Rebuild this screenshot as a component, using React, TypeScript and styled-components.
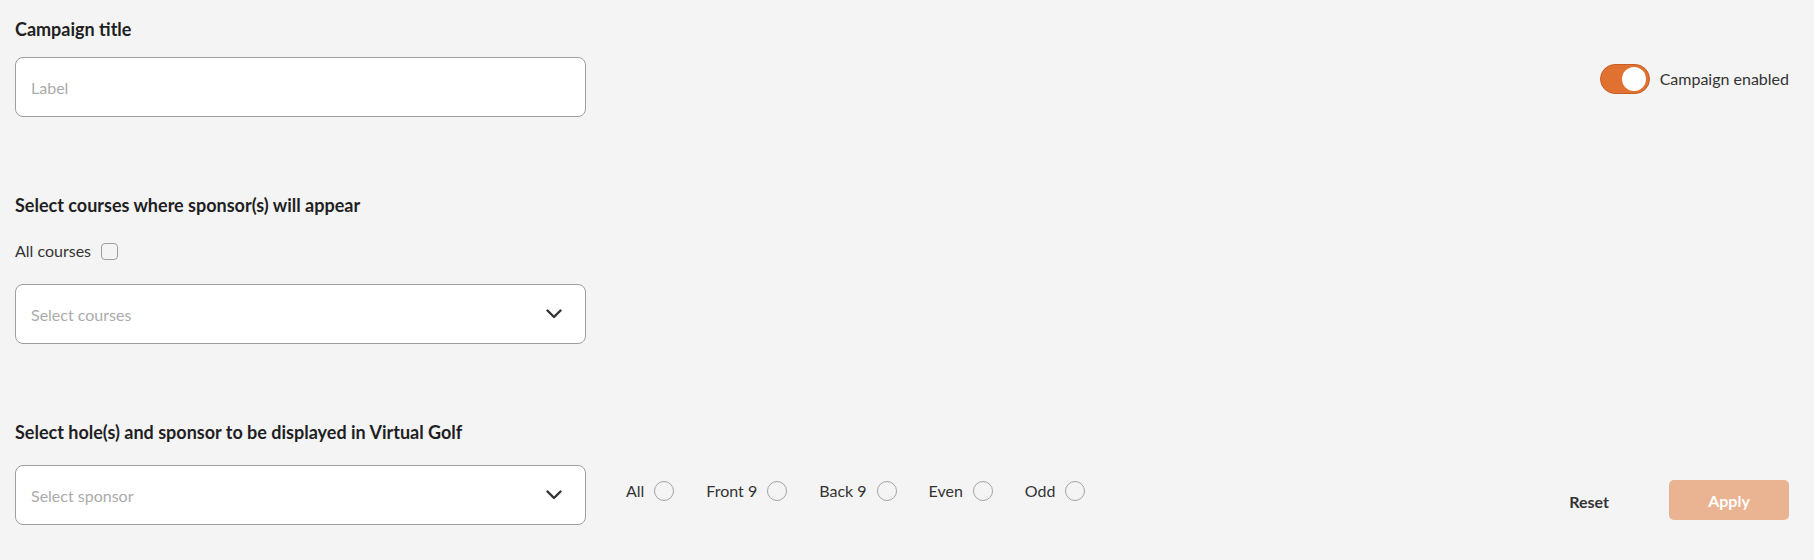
import styled, { createGlobalStyle } from 'styled-components';

const GlobalStyle = createGlobalStyle`
  * {
    box-sizing: border-box;
  }
  body {
    margin: 0;
    background: #f4f4f4;
    font-family: Lato, 'Open Sans', sans-serif;
    color: #333;
  }
`;

const Page = styled.div`
  min-height: 560px;
  padding: 18px 25px 0 15px;
  display: flex;
  flex-direction: column;
`;

const Section = styled.section<{ $gap?: number }>`
  margin-top: ${({ $gap }) => $gap ?? 0}px;
  display: flex;
  flex-direction: column;
`;

const TopRow = styled.div`
  display: flex;
  justify-content: space-between;
  align-items: flex-start;
`;

const Heading = styled.h2<{ $below: number }>`
  margin: 0 0 ${({ $below }) => $below}px;
  font-size: 18px;
  line-height: 22px;
  font-weight: 700;
  color: #1f1f24;
`;

const fieldBox = `
  width: 571px;
  height: 60px;
  border: 1px solid #9e9e9e;
  border-radius: 8px;
  background: #fff;
  font-family: Lato, 'Open Sans', sans-serif;
  font-size: 16px;
`;

const TextInput = styled.input`
  ${fieldBox}
  display: block;
  padding: 0 15px;
  color: #333;
  outline: none;

  &::placeholder {
    color: #ababab;
  }
`;

const Select = styled.div`
  ${fieldBox}
  display: flex;
  align-items: center;
  justify-content: space-between;
  padding: 0 23px 0 15px;
  color: #ababab;
  cursor: pointer;
  flex-shrink: 0;
`;

const Chevron = () => (
  <svg width="16" height="10" viewBox="0 0 16 10" fill="none" aria-hidden="true">
    <path d="M1.5 1.5L8 8L14.5 1.5" stroke="#333" strokeWidth="2.4" strokeLinecap="round" strokeLinejoin="round" />
  </svg>
);

const ToggleLabel = styled.label`
  margin-top: 46px;
  display: flex;
  align-items: center;
  gap: 10px;
  font-size: 16px;
  line-height: 20px;
  color: #333;
`;

const Track = styled.span<{ $on: boolean }>`
  width: 50px;
  height: 30px;
  padding: 0 3px;
  border-radius: 15px;
  border: 1px solid ${({ $on }) => ($on ? '#c75f24' : '#9e9e9e')};
  background: ${({ $on }) => ($on ? '#e07131' : '#ccc')};
  display: flex;
  align-items: center;
  justify-content: ${({ $on }) => ($on ? 'flex-end' : 'flex-start')};
`;

const Knob = styled.span`
  width: 24px;
  height: 24px;
  border-radius: 50%;
  background: #fff;
`;

const CheckRow = styled.label`
  margin-bottom: 23px;
  display: flex;
  align-items: center;
  gap: 10px;
  height: 20px;
  font-size: 16px;
  line-height: 20px;
  color: #333;
`;

const Checkbox = styled.input`
  appearance: none;
  margin: 0;
  width: 17px;
  height: 17px;
  border: 1.5px solid #9e9e9e;
  border-radius: 4px;
  background: transparent;
`;

const BottomRow = styled.div`
  display: flex;
  align-items: flex-start;
`;

const RadioGroup = styled.div`
  margin: 16px 0 0 40px;
  display: flex;
  gap: 32px;
`;

const RadioOption = styled.label`
  display: flex;
  align-items: center;
  gap: 10px;
  font-size: 16px;
  line-height: 20px;
  color: #333;
`;

const Radio = styled.input`
  appearance: none;
  margin: 0;
  width: 20px;
  height: 20px;
  border: 1.5px solid #a3a3a3;
  border-radius: 50%;
  background: transparent;
`;

const Actions = styled.div`
  margin: 15px 0 0 auto;
  display: flex;
  align-items: center;
  gap: 60px;
`;

const ResetButton = styled.button`
  padding: 0;
  border: none;
  background: none;
  font-family: Lato, 'Open Sans', sans-serif;
  font-size: 16px;
  font-weight: 700;
  color: #333;
  margin-top: 2px;
`;

const ApplyButton = styled.button<{ $disabled?: boolean }>`
  width: 120px;
  height: 40px;
  border: none;
  border-radius: 5px;
  background: ${({ $disabled }) => ($disabled ? '#eab391' : '#e07131')};
  color: #fff;
  font-family: Lato, 'Open Sans', sans-serif;
  font-size: 16px;
  font-weight: 700;
`;

const holes = ['All', 'Front 9', 'Back 9', 'Even', 'Odd'];

export default function App() {
  return (
    <>
      <GlobalStyle />
      <Page>
        <TopRow>
          <Section>
            <Heading $below={17}>Campaign title</Heading>
            <TextInput placeholder="Label" />
          </Section>
          <ToggleLabel>
            <Track $on>
              <Knob />
            </Track>
            Campaign enabled
          </ToggleLabel>
        </TopRow>

        <Section $gap={77}>
          <Heading $below={25}>Select courses where sponsor(s) will appear</Heading>
          <CheckRow>
            All courses
            <Checkbox type="checkbox" />
          </CheckRow>
          <Select>
            Select courses
            <Chevron />
          </Select>
        </Section>

        <Section $gap={77}>
          <Heading $below={22}>Select hole(s) and sponsor to be displayed in Virtual Golf</Heading>
          <BottomRow>
            <Select>
              Select sponsor
              <Chevron />
            </Select>
            <RadioGroup>
              {holes.map((h) => (
                <RadioOption key={h}>
                  {h}
                  <Radio type="radio" name="holes" />
                </RadioOption>
              ))}
            </RadioGroup>
            <Actions>
              <ResetButton>Reset</ResetButton>
              <ApplyButton $disabled>Apply</ApplyButton>
            </Actions>
          </BottomRow>
        </Section>
      </Page>
    </>
  );
}
